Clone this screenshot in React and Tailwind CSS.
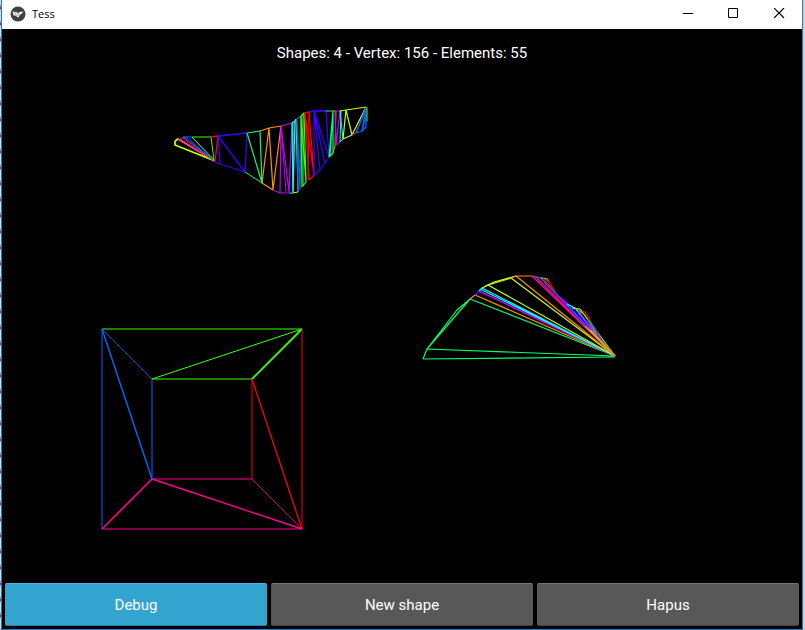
import React from 'react';

const ribbon = [
  ['#c8ff00', '175,141 178,139 215,161 175,145 175,141', 1.7],
  ['#ff0090', '178,140 183,138 215,161 180,139'],
  ['#ff0090', '179,140 213,160'],
  ['#0068ff', '183,137 192,137 213,160 186,137 183,137 211,158'],
  ['#38ff00', '192,137 211,137 214,160 192,137'],
  ['#ff0000', '211,137 218,136 215,161', 1.3],
  ['#3800ff', '218,136 247,133 245,172 218,136 220,164 215,162', 1.3],
  ['#3800ff', '218,136 247,133'],
  ['#3800ff', '220,164 245,172'],
  ['#00ff68', '247,133 260,131 262,183 247,133', 1.2],
  ['#00ff68', '245,172 262,183'],
  ['#ff9000', '260,131 269,128 262,183 273,190 269,128 281,126 273,190', 1.2],
  ['#c800ff', '281,126 292,123 289,192 281,126 280,193 289,193', 1.2],
  ['#c800ff', '281,126 286,192'],
  ['#c800ff', '273,190 280,193'],
  ['#00ffff', '292,123 295,121 293,192 292,123', 1.2],
  ['#00ffff', '293,122 293,193 289,193'],
  ['#c8ff00', '295,121 296,119 298,192 293,193'],
  ['#0068ff', '297,119 301,116 300,190 297,119 298,191', 1.2],
  ['#38ff00', '301,116 304,113 306,182 301,116 302,187 306,182', 1.2],
  ['#38ff00', '303,115 303,185'],
  ['#ff0000', '304,113 309,112 314,175 305,113 309,180 314,175', 1.3],
  ['#ff0000', '309,112 308,180'],
  ['#3800ff', '309,112 314,111 314,175 320,170 314,111 326,111 329,157 314,111 325,164', 1.3],
  ['#3800ff', '314,111 326,111'],
  ['#3800ff', '320,170 329,157'],
  ['#00ff68', '326,111 333,111 329,157 333,153 333,111 330,156', 1.2],
  ['#ff9000', '333,111 336,111 335,146 333,153'],
  ['#c800ff', '335,111 340,111 336,145 335,111', 1.2],
  ['#c800ff', '336,145 340,142'],
  ['#00ffff', '340,111 343,139 340,142 341,110'],
  ['#c8ff00', '340,111 346,110 343,139 352,135 346,110 366,107 352,135', 1.2],
  ['#ff0090', '366,107 356,133 352,135'],
  ['#0068ff', '366,108 362,131 356,133 366,109', 1.3],
  ['#0068ff', '366,108 366,127 362,131 366,115', 1.3],
  ['#38ff00', '367,107 367,121'],
];

const fan = [
  ['#00ff68', '470,299 615,356 427,349 423,359 615,357'],
  ['#00ff68', '427,349 457,310 470,299 427,349'],
  ['#ff9000', '470,299 475,295 615,356'],
  ['#c800ff', '475,295 479,291 615,356', 1.4],
  ['#3800ff', '475,295 480,290'],
  ['#00ffff', '479,291 482,288 615,356 480,289'],
  ['#c8ff00', '482,288 488,285 615,356'],
  ['#c8ff00', '488,285 511,278 615,356'],
  ['#c8ff00', '484,287 494,282 516,276'],
  ['#ff9000', '511,278 516,276 532,276'],
  ['#ff9000', '516,276 615,356'],
  ['#ff0090', '532,276 615,356 536,277 532,276', 1.4],
  ['#0068ff', '536,277 541,278 615,356', 1.4],
  ['#38ff00', '541,278 547,279 549,282', 1.4],
  ['#ff0000', '543,278 558,296 549,282 546,279'],
  ['#3800ff', '558,296 567,303 615,356 558,296'],
  ['#0068ff', '544,282 565,303 615,356'],
  ['#c800ff', '558,296 568,305 575,308 615,356'],
  ['#00ffff', '567,304 575,308 606,347'],
  ['#c8ff00', '572,308 580,309 615,356'],
  ['#38ff00', '575,308 584,314 606,347'],
  ['#c800ff', '578,310 594,333 615,356'],
  ['#ff0000', '582,311 585,312 590,320 593,326 605,345'],
  ['#0068ff', '588,319 595,328 598,336 615,356'],
  ['#c8ff00', '590,330 615,356'],
  ['#ff9000', '585,326 615,356'],
];

const frame = [
  ['#38ff00', '152,379 252,379'],
  ['#38ff00', '102,329 302,329'],
  ['#38ff00', '252,379 302,329', 1.8],
  ['#38ff00', '152,379 302,329'],
  ['#ff0000', '302,329 302,529'],
  ['#ff0000', '252,379 252,479'],
  ['#ff0000', '302,529 252,379', 1.3],
  ['#ff0090', '252,479 152,479'],
  ['#ff0090', '102,529 302,529'],
  ['#ff0090', '302,529 152,479', 1.4],
  ['#ff0090', '152,479 102,529', 1.6],
  ['#0068ff', '102,329 102,529'],
  ['#0068ff', '152,379 152,479'],
  ['#0068ff', '152,479 102,329', 1.4],
];

const hairlines = [
  ['#0068ff', '102,329 152,379'],
  ['#ff0090', '252,479 302,529'],
];

function Lines({ data, width: base = 1, opacity = 1 }) {
  return (
    <g opacity={opacity}>
      {data.map(([color, points, width = base], i) => (
        <polyline key={i} points={points} stroke={color} strokeWidth={width} />
      ))}
    </g>
  );
}

function TitleBar() {
  return (
    <header className="flex h-[29px] shrink-0 items-center bg-white pb-0.5 text-black">
      <svg className="ml-2 size-4" viewBox="0 0 16 16" aria-hidden="true">
        <circle cx="8" cy="8" r="7.5" fill="#3d4145" />
        <path d="M2.500 5 L5 6.500 L6 5.500 L8 7.500 L9.500 6 L13.500 5.500 L11.500 8 L10 8.500 L8.500 11.500 L6.500 10.500 L5.500 9.500 L3.500 9.500 Z" fill="#f2f2f2" />
        <path d="M5 6.500 L6.500 9.500 M8 7.500 L8 10" stroke="#777" strokeWidth="0.6" />
      </svg>
      <h1 className="ml-1.5 font-['Open_Sans',sans-serif] text-[11px] leading-4">Tess</h1>
      <div className="ml-auto flex h-full">
        <button aria-label="Minimize" className="grid w-[46px] place-items-center">
          <svg className="size-[11px]" viewBox="0 0 11 11" stroke="#000"><path d="M1 5.5H11" /></svg>
        </button>
        <button aria-label="Maximize" className="grid w-[46px] place-items-center">
          <svg className="size-[11px]" viewBox="0 0 11 11" stroke="#000" fill="none"><path d="M.5 .5H9.5V9.5H.5Z" /></svg>
        </button>
        <button aria-label="Close" className="grid w-[46px] place-items-center">
          <svg className="size-[11px]" viewBox="0 0 11 11" stroke="#000" strokeWidth="1.2"><path d="M0 0L10 10M10 0L0 10" /></svg>
        </button>
      </div>
    </header>
  );
}

const buttonBase =
  'h-[43px] flex-1 rounded-[2px] border-y text-[15px] leading-5 text-white';

export default function App() {
  return (
    <div className="flex h-screen bg-[#d0d0d0] font-[Roboto,sans-serif]">
      <div className="w-px shrink-0 bg-[repeating-linear-gradient(to_bottom,#dcdcdc_0px,#dcdcdc_4px,#c89070_5px,#c89070_7px,#d01030_7px,#d01030_9px,#e0a070_9px,#e0a070_10px,#dcdcdc_11px,#dcdcdc_16px)]" />
      <div className="mr-0.5 flex min-w-0 flex-1 flex-col border-x border-b border-[#1a7fd0] bg-black">
        <TitleBar />
        <main className="flex min-h-0 flex-1 flex-col">
          <p className="h-12 shrink-0 text-center text-[15px] leading-[48px] text-white">
            Shapes: 4 - Vertex: 156 - Elements: 55
          </p>
          <svg
            className="min-h-0 w-full flex-1"
            viewBox="2 77 800 506"
            fill="none"
            strokeLinejoin="bevel"
            role="img"
            aria-label="Tessellated shapes"
          >
            <Lines data={ribbon} />
            <Lines data={fan} width={1.2} />
            <Lines data={frame} />
            <Lines data={hairlines} opacity={0.8} />
          </svg>
          <div className="flex shrink-0 gap-1 px-[3px] pb-[3px]">
            <button className={`${buttonBase} border-t-[#55b4d9] border-b-[#2783a8] bg-[#33a3cf]`}>Debug</button>
            <button className={`${buttonBase} border-t-[#777777] border-b-[#444444] bg-[#585858]`}>New shape</button>
            <button className={`${buttonBase} border-t-[#777777] border-b-[#444444] bg-[#585858]`}>Hapus</button>
          </div>
        </main>
      </div>
    </div>
  );
}
